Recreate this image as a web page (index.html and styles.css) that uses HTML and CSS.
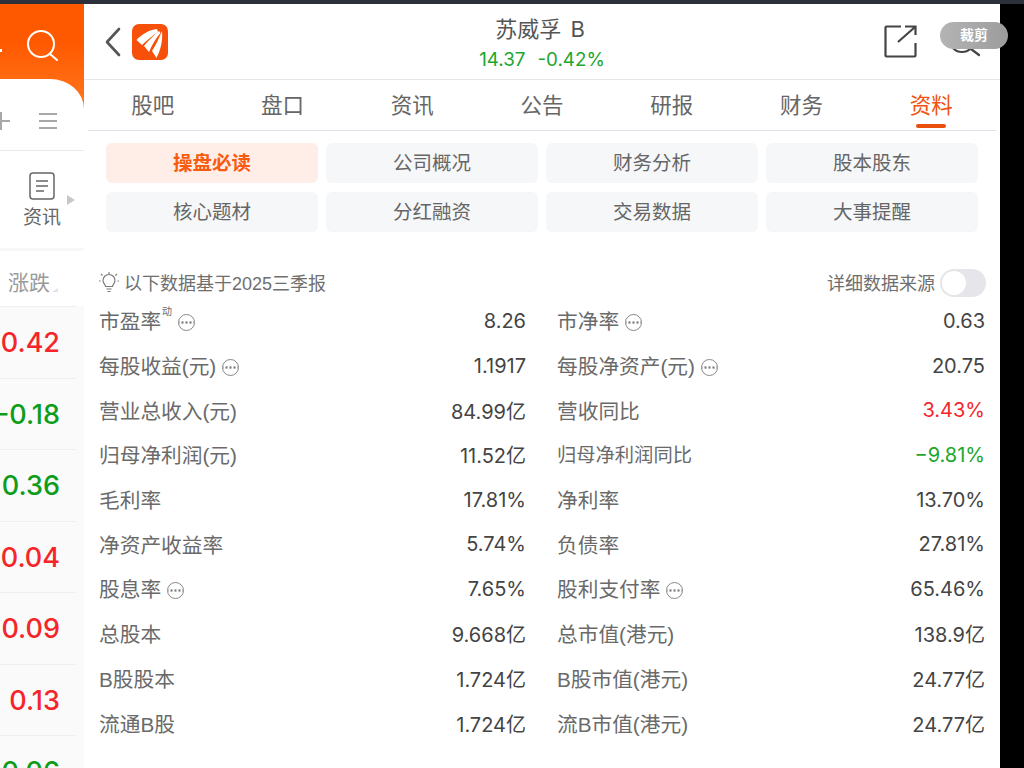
FILE: index.html
```html
<!DOCTYPE html>
<html lang="zh">
<head>
<meta charset="utf-8">
<title>苏威孚B</title>
<link rel="stylesheet" href="styles.css">
</head>
<body>
<div class="topbar"></div>
<div class="app">
  <aside class="side">
    <div class="side-head">
      <svg class="side-search" width="36" height="36" viewBox="0 0 36 36"><circle cx="16" cy="16" r="13" fill="none" stroke="#fff" stroke-width="2"/><path d="M25 26l7 6" fill="none" stroke="#fff" stroke-width="2" stroke-linecap="round"/></svg>
    </div>
    <div class="side-sheet">
      <div class="side-tools">
        <span class="plus"></span>
        <svg width="18" height="18" viewBox="0 0 18 18"><path d="M0 2h18M0 9h18M0 16h18" stroke="#a8a8a8" stroke-width="2"/></svg>
      </div>
      <div class="side-news">
        <svg width="26" height="28" viewBox="0 0 26 28"><rect x="1" y="1" width="24" height="26" rx="3" fill="none" stroke="#666" stroke-width="1.5"/><path d="M7 9h12M7 14h12M7 19h8" stroke="#666" stroke-width="1.5"/></svg>
        <span class="side-news-label">资讯</span>
        <span class="side-arrow"></span>
      </div>
      <div class="side-col">涨跌<span class="sort"></span></div>
      <ul class="side-list">
        <li class="up">0.42</li>
        <li class="down">-0.18</li>
        <li class="down">0.36</li>
        <li class="up">0.04</li>
        <li class="up">0.09</li>
        <li class="up">0.13</li>
        <li class="down">0.06</li>
      </ul>
    </div>
  </aside>
  <main class="main">
    <header class="head">
      <div class="head-left">
        <svg class="back" width="18" height="30" viewBox="0 0 18 30"><path d="M15 2L3 15l12 13" fill="none" stroke="#555" stroke-width="2.6" stroke-linecap="round" stroke-linejoin="round"/></svg>
        <svg class="logo" width="36" height="36" viewBox="0 0 36 36"><rect width="36" height="36" rx="7" fill="#f6500a"/><path d="M25 5C17 6 10 10 4.500 16L10 21C15 16 20 12 26 8Z" fill="#fff"/><path d="M27 7C22 11 16 17 12 22L17 28C20 21 24 14 28.500 9Z" fill="#fff"/><path d="M30 7C27 14 24 21 20 27L24.500 34C28 27 31 18 30 7Z" fill="#fff"/></svg>
      </div>
      <div class="title">
        <div class="name">苏威孚 B</div>
        <div class="quote"><span>14.37</span><span>-0.42%</span></div>
      </div>
      <div class="head-right">
        <svg width="33" height="33" viewBox="0 0 33 33"><path d="M17 1.500H2.500a1 1 0 0 0-1 1v28a1 1 0 0 0 1 1h28a1 1 0 0 0 1-1V18M21 1.500h10.500V10M31 2L14 17" fill="none" stroke="#444" stroke-width="2.200"/></svg>
        <svg class="head-search" width="34" height="34" viewBox="0 0 34 34"><circle cx="15" cy="15" r="12" fill="none" stroke="#444" stroke-width="2.200"/><path d="M24 24l8 6" stroke="#444" stroke-width="2.200" stroke-linecap="round"/></svg>
        <div class="crop">裁剪</div>
      </div>
    </header>
    <nav class="tabs">
      <a>股吧</a><a>盘口</a><a>资讯</a><a>公告</a><a>研报</a><a>财务</a><a class="on">资料</a>
    </nav>
    <div class="grid-btns">
      <a class="on">操盘必读</a><a>公司概况</a><a>财务分析</a><a>股本股东</a>
      <a>核心题材</a><a>分红融资</a><a>交易数据</a><a>大事提醒</a>
    </div>
    <div class="note">
      <div class="note-left">
        <svg width="20" height="20" viewBox="0 0 20 20"><path d="M6.500 14.500c0-2-2.500-3-2.500-6a6 6 0 0 1 12 0c0 3-2.500 4-2.500 6zM7.500 17h5M8.500 19.500h3M10 2V0M3.500 3.500L2 2M16.500 3.500L18 2M1.500 9H0M20 9h-1.500" fill="none" stroke="#777" stroke-width="1.100"/></svg>
        <span>以下数据基于2025三季报</span>
      </div>
      <div class="note-right">
        <span>详细数据来源</span>
        <span class="switch"><i></i></span>
      </div>
    </div>
    <div class="data">
      <div class="row"><span class="k">市盈率<sup>动</sup><i class="more"></i></span><span class="v">8.26</span></div>
      <div class="row"><span class="k">市净率<i class="more"></i></span><span class="v">0.63</span></div>
      <div class="row"><span class="k">每股收益(元)<i class="more"></i></span><span class="v">1.1917</span></div>
      <div class="row"><span class="k">每股净资产(元)<i class="more"></i></span><span class="v">20.75</span></div>
      <div class="row"><span class="k">营业总收入(元)</span><span class="v">84.99亿</span></div>
      <div class="row"><span class="k">营收同比</span><span class="v up">3.43%</span></div>
      <div class="row"><span class="k">归母净利润(元)</span><span class="v">11.52亿</span></div>
      <div class="row"><span class="k small">归母净利润同比</span><span class="v down">−9.81%</span></div>
      <div class="row"><span class="k">毛利率</span><span class="v">17.81%</span></div>
      <div class="row"><span class="k">净利率</span><span class="v">13.70%</span></div>
      <div class="row"><span class="k">净资产收益率</span><span class="v">5.74%</span></div>
      <div class="row"><span class="k">负债率</span><span class="v">27.81%</span></div>
      <div class="row"><span class="k">股息率<i class="more"></i></span><span class="v">7.65%</span></div>
      <div class="row"><span class="k">股利支付率<i class="more"></i></span><span class="v">65.46%</span></div>
      <div class="row"><span class="k">总股本</span><span class="v">9.668亿</span></div>
      <div class="row"><span class="k">总市值(港元)</span><span class="v">138.9亿</span></div>
      <div class="row"><span class="k">B股股本</span><span class="v">1.724亿</span></div>
      <div class="row"><span class="k">B股市值(港元)</span><span class="v">24.77亿</span></div>
      <div class="row"><span class="k">流通B股</span><span class="v">1.724亿</span></div>
      <div class="row"><span class="k">流B市值(港元)</span><span class="v">24.77亿</span></div>
    </div>
  </main>
</div>
</body>
</html>
```
FILE: styles.css
```css
* { box-sizing: border-box; }
html, body { margin: 0; height: 100%; }
body {
  width: 1024px; height: 768px; overflow: hidden; background: #000;
  font-family: "Liberation Sans", "Noto Sans CJK SC", sans-serif;
  color: #666;
}
.topbar { height: 4px; background: #2b303b; }
.app { display: flex; width: 1000px; height: 764px; background: #fff; }

.side { width: 84px; flex: none; overflow: hidden; background: #fff; display: flex; flex-direction: column; }
.side-head {
  height: 110px; flex: none; padding: 24px 0 0 25px; position: relative;
  background: linear-gradient(#ff5900 35%, #ff7a20);
}
.side-head::before {
  content: ""; position: absolute; left: 0; top: 45px; width: 2px; height: 3px; background: #fff;
}
.side-sheet {
  margin-top: -35px; flex: 1; background: #fff; border-radius: 0 34px 0 0 / 0 30px 0 0;
  position: relative; min-height: 0;
}
.side-tools {
  height: 72px; display: flex; align-items: center; gap: 29px; padding: 13px 0 0 0;
  border-bottom: 1px solid #e9e9e9; overflow: hidden;
}
.plus { width: 10px; height: 18px; flex: none;
  background:
    linear-gradient(#a8a8a8, #a8a8a8) 0 8px / 10px 2px no-repeat,
    linear-gradient(#a8a8a8, #a8a8a8) 0 0 / 2px 18px no-repeat; }
.side-news {
  height: 100px; display: flex; flex-direction: column; align-items: center; padding: 21px 0 0 0;
  position: relative; width: 84px; border-bottom: 3px solid #f7f7f7;
}
.side-news-label { font-size: 19px; line-height: 26px; color: #666; margin-top: 5px; }
.side-arrow { position: absolute; left: 67px; top: 44px; width: 0; height: 0;
  border-left: 8px solid #c8c8c8; border-top: 5px solid transparent; border-bottom: 5px solid transparent; }
.side-col { height: 55px; padding: 17px 0 0 8px; font-size: 21px; line-height: 30px; color: #9a9a9a; position: relative; }
.sort { position: absolute; left: 52px; top: 37px; width: 0; height: 0;
  border-right: 6px solid #e2e2e2; border-top: 4px solid transparent; }
.side-list { list-style: none; margin: 0; padding: 0; background: #fafafa; }
.side-list li {
  height: 71.500px; display: flex; justify-content: flex-end; padding-right: 24px;
  font-family: Inter, "Liberation Sans", sans-serif; font-weight: 500;
  font-size: 27px; line-height: 73px; white-space: nowrap;
  background: linear-gradient(#eeeeee, #eeeeee) 0 0 / 76px 1px no-repeat;
}
.side-list li.up { color: #f5262a; }
.side-list li.down { color: #0d9d1a; }

.main { flex: 1; min-width: 0; display: flex; flex-direction: column; }
.head {
  height: 76px; flex: none; border-bottom: 1px solid #e6e6ea; display: flex; align-items: center;
  justify-content: space-between; padding: 0 12px 0 20px; position: relative;
}
.head-left { display: flex; align-items: center; gap: 10px; }
.title { position: absolute; left: 0; right: 4px; top: 9px; text-align: center; }
.name { font-family: Inter, "Noto Sans CJK SC", sans-serif; font-size: 22px; line-height: 32px; color: #555; word-spacing: 3px; }
.quote { font-family: Inter, "Liberation Sans", sans-serif; font-size: 18.800px; line-height: 30px; color: #1ea62e; display: flex; justify-content: center; gap: 12px; margin-left: 4px; }
.head-right { display: flex; align-items: center; gap: 30px; position: relative; }
.crop {
  position: absolute; right: -20px; top: -3px; width: 68px; height: 27px; border-radius: 14px;
  background: linear-gradient(90deg, #b4b4b4, #9c9c9c); color: #fff; font-size: 14px; font-weight: bold; line-height: 27px; text-align: center;
}
.head-search { margin-right: 7px; }

.tabs { height: 51px; flex: none; display: flex; border-bottom: 1px solid #dfe0e8; width: 908px; margin-left: 4px; }
.tabs a { flex: 1; text-align: center; font-size: 21.500px; line-height: 52px; color: #666; position: relative; }
.tabs a.on { color: #f0530f; }
.tabs a.on::after {
  content: ""; position: absolute; left: 50%; bottom: 2px; width: 30px; height: 4px; margin-left: -15px;
  background: #e9500e; border-radius: 2px;
}

.grid-btns { flex: none; display: grid; grid-template-columns: repeat(4, 212px); gap: 9px 8px; padding: 12px 0 0 22px; }
.grid-btns a {
  height: 40px; border-radius: 6px; background: #f6f7f9; text-align: center; line-height: 41px;
  font-size: 19.500px; color: #666;
}
.grid-btns a.on { background: #ffeee7; color: #f85a10; font-weight: bold; }

.note { flex: none; display: flex; justify-content: space-between; align-items: center; height: 30px; margin-top: 35px; padding: 0 14px 0 15px; font-size: 18px; color: #6f6f6f; }
.note-left, .note-right { display: flex; align-items: center; gap: 5px; }
.switch { width: 46px; height: 28px; border-radius: 14px; background: #e5e5ea; padding: 2px; display: block; margin-top: 2px; }
.switch i { display: block; width: 24px; height: 24px; border-radius: 12px; background: #fff; }

.data { flex: none; display: grid; grid-template-columns: 427px 428px; column-gap: 31px; padding: 0 0 0 15px; margin-top: 1px; }
.row { height: 44.700px; display: flex; justify-content: space-between; align-items: center; font-size: 20.700px; }
.k { color: #6a6a6a; display: flex; align-items: center; white-space: nowrap; }
.k.small { font-size: 19.300px; }
.k sup { font-size: 10px; line-height: 10px; align-self: flex-start; margin: 2px 0 0 1px; }
.v { color: #444; white-space: nowrap; font-family: Inter, "Noto Sans CJK SC", sans-serif; font-size: 20px; padding-top: 1px; }
.v.up { color: #f5262a; }
.v.down { color: #1ea62e; }
.more {
  display: inline-block; width: 17px; height: 17px; border: 1px solid #888; border-radius: 50%; margin: 4px 0 0 6px;
  background: radial-gradient(circle, #777 1px, transparent 1.300px) 1.500px 0 / 4px 15px repeat-x;
}
```
